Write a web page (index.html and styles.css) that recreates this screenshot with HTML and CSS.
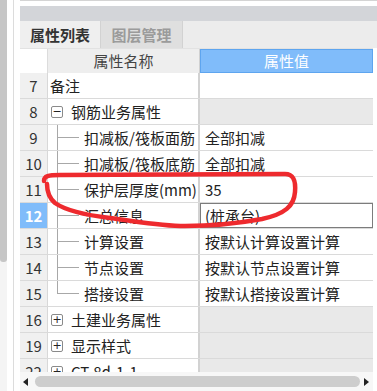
FILE: index.html
```html
<!DOCTYPE html>
<html lang="zh-CN">
<head>
    <meta charset="UTF-8">
    <meta name="viewport" content="width=device-width, initial-scale=1.0">
    <title>属性列表</title>
    <link rel="stylesheet" href="styles.css">
</head>
<body>
    <div id="app">
        <div class="side">
            <div class="side-thumb"></div>
        </div>
        <div class="gutter"></div>
        <div class="main">
            <div class="topline"></div>
            <div class="titlebar"></div>
            <div class="tabs">
                <span class="tab active">属性列表</span>
                <span class="tab">图层管理</span>
            </div>
            <div class="grid">
                <div class="head">
                    <span class="h-num"></span>
                    <span class="h-name">属性名称</span>
                    <span class="h-val">属性值</span>
                </div>
                <div class="row">
                    <span class="num">7</span>
                    <span class="name">备注</span>
                    <span class="val"></span>
                </div>
                <div class="row group">
                    <span class="num">8</span>
                    <span class="name"><i class="toggle">−</i>钢筋业务属性</span>
                    <span class="val"></span>
                </div>
                <div class="row">
                    <span class="num">9</span>
                    <span class="name"><i class="branch"></i>扣减板/筏板面筋</span>
                    <span class="val">全部扣减</span>
                </div>
                <div class="row">
                    <span class="num">10</span>
                    <span class="name"><i class="branch"></i>扣减板/筏板底筋</span>
                    <span class="val">全部扣减</span>
                </div>
                <div class="row">
                    <span class="num">11</span>
                    <span class="name"><i class="branch"></i>保护层厚度(mm)</span>
                    <span class="val">35</span>
                </div>
                <div class="row selected">
                    <span class="num">12</span>
                    <span class="name"><i class="branch"></i>汇总信息</span>
                    <span class="val">(桩承台)</span>
                </div>
                <div class="row">
                    <span class="num">13</span>
                    <span class="name"><i class="branch"></i>计算设置</span>
                    <span class="val">按默认计算设置计算</span>
                </div>
                <div class="row">
                    <span class="num">14</span>
                    <span class="name"><i class="branch"></i>节点设置</span>
                    <span class="val">按默认节点设置计算</span>
                </div>
                <div class="row">
                    <span class="num">15</span>
                    <span class="name"><i class="branch last"></i>搭接设置</span>
                    <span class="val">按默认搭接设置计算</span>
                </div>
                <div class="row group">
                    <span class="num">16</span>
                    <span class="name"><i class="toggle">+</i>土建业务属性</span>
                    <span class="val"></span>
                </div>
                <div class="row group">
                    <span class="num">19</span>
                    <span class="name"><i class="toggle">+</i>显示样式</span>
                    <span class="val"></span>
                </div>
                <div class="row group">
                    <span class="num">22</span>
                    <span class="name"><i class="toggle">+</i>CT-8d-1-1</span>
                    <span class="val"></span>
                </div>
            </div>
            <div class="hscroll">
                <span class="arrow-left"></span>
                <span class="hthumb"></span>
                <span class="arrow-right"></span>
            </div>
        </div>

        <svg class="mark" width="377" height="391" viewBox="0 0 377 391">
            <path d="M 44 181 C 44 176, 48 175, 60 175 L 285 174 C 293 174, 296 180, 295 192 C 294 206, 285 214, 262 219 C 240 223, 215 226, 185 226 C 160 226, 135 221, 110 218 C 85 215, 65 210, 55 203 C 48 197, 47 190, 47 184" fill="none" stroke="#ee2a2e" stroke-width="4.5" stroke-linecap="round" stroke-linejoin="round"/>
        </svg>
    </div>
</body>
</html>
```

FILE: styles.css
```css
html,
body {
    margin: 0;
    padding: 0;
    background: #fff;
}

#app {
    position: relative;
    display: flex;
    width: 377px;
    height: 391px;
    overflow: hidden;
    font-family: "Noto Sans CJK SC", "Microsoft YaHei", sans-serif;
    font-size: 15px;
    color: #222;
}

.side {
    width: 7px;
    background: #f4f4f4;
}

.side-thumb {
    height: 262px;
    background: #c6c6c6;
    border-radius: 0 0 3px 3px;
}

.gutter {
    width: 6px;
    border-right: 1px solid #dcdcdc;
    margin-right: 6px;
}

.main {
    flex: 1;
    display: flex;
    flex-direction: column;
}

.topline {
    height: 1px;
    margin-bottom: 5px;
    background: #d4d4d4;
}

.titlebar {
    height: 15px;
    background: #d3d5d9;
}

.tabs {
    display: flex;
    height: 27px;
    background: #ececec;
}

.tab {
    width: 81px;
    line-height: 27px;
    text-align: center;
    font-weight: bold;
    color: #9b9b9b;
    background: #dfdfdf;
    border-right: 1px solid #d2d2d2;
}

.tab.active {
    width: 80px;
    color: #333;
    background: #efefef;
}

.grid {
    width: 353px;
    height: 324px;
    overflow: hidden;
}

.head,
.row {
    display: grid;
    grid-template-columns: 28px 152px 173px;
}

.head {
    height: 25px;
    border-top: 1px solid #e2e2e2;
    box-sizing: border-box;
}

.h-num {
    background: #fff;
    border-right: 1px solid #dcdcdc;
}

.h-name {
    background: #eeeeee;
    color: #444;
    text-align: center;
    line-height: 24px;
    border-right: 1px solid #d0d0d0;
}

.h-val {
    background: #80bcfa;
    border: 1px solid #5ea5ef;
    color: #fff;
    text-align: center;
    line-height: 22px;
}

.row {
    height: 26px;
    box-sizing: border-box;
    border-bottom: 1px solid #dadada;
}

.num {
    background: #f0f0f0;
    border-right: 1px solid #d8d8d8;
    color: #333;
    text-align: center;
    line-height: 25px;
}

.name {
    display: flex;
    align-items: center;
    padding-left: 2px;
    border-right: 2px solid #d2d2d2;
    background: #fff;
    white-space: nowrap;
    overflow: hidden;
}

.val {
    padding-left: 5px;
    line-height: 25px;
    background: #fff;
    white-space: nowrap;
}

.group .val {
    background: #e9e9e9;
}

.toggle {
    display: flex;
    align-items: center;
    justify-content: center;
    width: 10px;
    height: 10px;
    margin: 0 8px 0 1px;
    border: 1px solid #8a8a8a;
    border-radius: 2px;
    font-style: normal;
    font-family: "DejaVu Sans", sans-serif;
    font-size: 11px;
    line-height: 1;
    color: #222;
}

.branch {
    align-self: stretch;
    display: flex;
    align-items: center;
    width: 21px;
    margin: 0 5px 0 7px;
    border-left: 1px solid #a8a8a8;
}

.branch::after {
    content: "";
    width: 100%;
    border-top: 1px solid #a8a8a8;
}

.branch.last {
    align-self: flex-start;
    height: 13px;
    align-items: flex-end;
}

.selected .num {
    background: #80bcfa;
    color: #fff;
    font-weight: bold;
}

.selected .val {
    box-shadow: inset 0 0 0 1px #7c7c7c;
}

.hscroll {
    display: flex;
    align-items: center;
    width: 353px;
    height: 19px;
    background: #f7f7f7;
}

.arrow-left {
    margin-left: 3px;
    border-right: 5px solid #222;
    border-top: 4px solid transparent;
    border-bottom: 4px solid transparent;
}

.hthumb {
    width: 325px;
    height: 11px;
    margin: 0 4px 0 7px;
    border-radius: 6px;
    background: #cdcdcd;
}

.arrow-right {
    border-left: 5px solid #222;
    border-top: 4px solid transparent;
    border-bottom: 4px solid transparent;
}

.mark {
    position: absolute;
    left: 0;
    top: 0;
    pointer-events: none;
}
```
